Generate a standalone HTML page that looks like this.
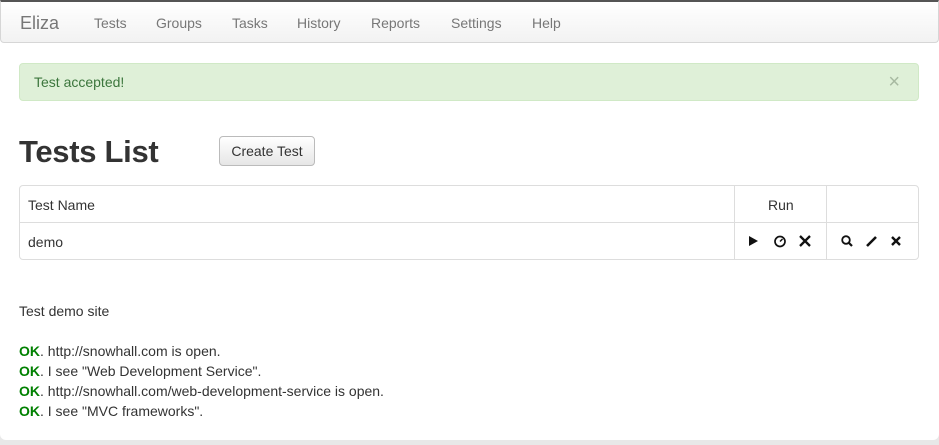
<!DOCTYPE html>
<html><head><meta charset="utf-8"><style>
*{box-sizing:border-box;margin:0;padding:0}
body{width:939px;height:445px;background:#e8e8e8;font-family:"Liberation Sans",sans-serif;font-size:14px;color:#333;position:relative;overflow:hidden}
.page{position:absolute;left:0;top:0;width:939px;height:440px;background:#fff;border-radius:0 0 6px 6px}
.nav{position:absolute;left:0;top:0;width:939px;height:43px;background:linear-gradient(#fff,#f2f2f2);border:1px solid #d6d6d6;border-top:2px solid #555;border-radius:0 0 4px 4px}
.nav span{position:absolute;top:13px;color:#777;font-size:14px}
.brand{font-size:18px!important;top:11px!important}
.alert{position:absolute;left:19px;top:63px;width:900px;height:38px;background:#dff0d8;border:1px solid #d0e9c6;border-radius:4px;color:#3c763d;padding:10px 14px}
.alert .x{position:absolute;right:18px;top:7px;font-size:20px;color:#a7b9a1}
h1{position:absolute;left:19px;top:134px;font-size:31px;letter-spacing:-0.3px;font-weight:bold;color:#333}
.btn{position:absolute;left:219px;top:136px;width:96px;height:30px;border:1px solid #bbb;border-radius:4px;background:linear-gradient(#fff,#e6e6e6);text-align:center;line-height:28px;color:#333}
.tbl{position:absolute;left:19px;top:185px;width:900px;height:75px;border:1px solid #ddd;border-radius:4px}
.tbl .h{position:absolute;left:0;top:36px;width:898px;border-top:1px solid #ddd}
.tbl .v{position:absolute;top:0;height:73px;border-left:1px solid #ddd}
.tbl span{position:absolute}
.txt{position:absolute;left:19px;top:301px;line-height:20px}
.ok{color:#008000;font-weight:bold}
</style></head><body>
<div class="page"></div>
<div class="nav">
<span class="brand" style="left:19px">Eliza</span>
<span style="left:93px">Tests</span><span style="left:155px">Groups</span><span style="left:231px">Tasks</span><span style="left:296px">History</span><span style="left:370px">Reports</span><span style="left:450px">Settings</span><span style="left:531px">Help</span>
</div>
<div class="alert">Test accepted!<span class="x">×</span></div>
<h1>Tests List</h1>
<div class="btn">Create Test</div>
<div class="tbl">
<div class="h"></div><div class="v" style="left:714px"></div><div class="v" style="left:806px"></div>
<span style="left:8px;top:11px">Test Name</span>
<span style="left:748px;top:11px">Run</span>
<span style="left:8px;top:48px">demo</span>
<svg style="position:absolute;left:726px;top:48px" width="70" height="14" viewBox="0 0 70 14">
<path d="M3 2L12 7L3 12Z" fill="#111"/>
<circle cx="34" cy="7.5" r="5" fill="none" stroke="#111" stroke-width="1.7"/><path d="M34 7.5L36.5 5" stroke="#111" stroke-width="1.5"/>
<path d="M54 2L64 12M64 2L54 12" stroke="#111" stroke-width="2.3"/>
</svg>
<svg style="position:absolute;left:818px;top:48px" width="80" height="14" viewBox="0 0 80 14">
<circle cx="8" cy="6" r="3.8" fill="none" stroke="#111" stroke-width="1.8"/><path d="M10.5 8.5L14 12" stroke="#111" stroke-width="2.2"/>
<path d="M29 12L38 3" stroke="#111" stroke-width="2.6"/>
<path d="M54 3L62 11M62 3L54 11" stroke="#111" stroke-width="2.4"/>
</svg>
</div>
<div class="txt">Test demo site<br><br>
<span class="ok">OK</span>. http://snowhall.com is open.<br>
<span class="ok">OK</span>. I see "Web Development Service".<br>
<span class="ok">OK</span>. http://snowhall.com/web-development-service is open.<br>
<span class="ok">OK</span>. I see "MVC frameworks".</div>
</body></html>
